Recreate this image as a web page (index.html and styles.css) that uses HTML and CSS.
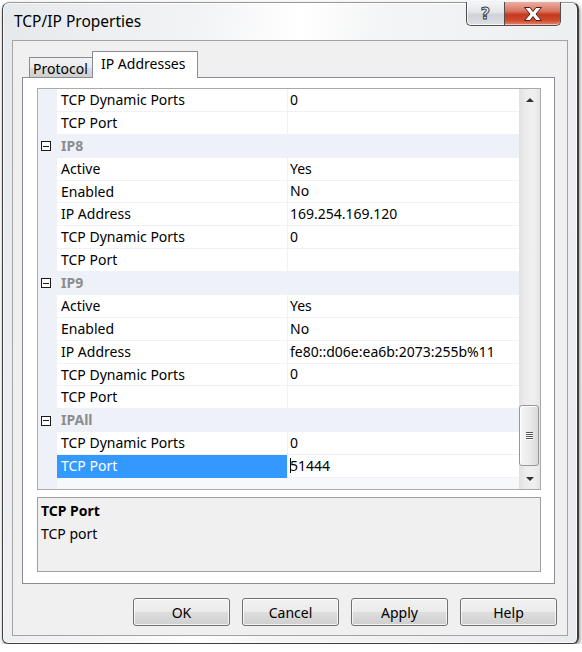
FILE: index.html
```html
<!DOCTYPE html>
<html>
<head>
<meta charset="utf-8">
<title>TCP/IP Properties</title>
<link rel="stylesheet" href="styles.css">
</head>
<body>
<div class="window">
  <div class="titlebar">
    <span class="title">TCP/IP Properties</span>
    <div class="caption">
      <div class="cbtn help"><span class="qmark">?</span></div>
      <div class="cbtn close">
        <svg width="24" height="18" viewBox="0 0 24 18"><path d="M3.5 2.5 H9 L12 6.5 L15 2.5 H20.5 L15 9 L20.5 15.5 H15 L12 11.5 L9 15.5 H3.5 L9 9 Z" fill="#fff" stroke="#5a1e14" stroke-width="1" stroke-linejoin="round"/></svg>
      </div>
    </div>
  </div>
  <div class="client">
    <div class="tabs">
      <div class="tab">Protocol</div>
      <div class="tab active">IP Addresses</div>
    </div>
    <div class="tabpage">
      <div class="grid">
        <div class="rows">
          <div class="row"><div class="gutter"></div><div class="name">TCP Dynamic Ports</div><div class="value">0</div></div>
          <div class="row"><div class="gutter"></div><div class="name">TCP Port</div><div class="value"></div></div>
          <div class="row cat"><div class="gutter"><span class="toggle"></span></div><div class="catname">IP8</div></div>
          <div class="row"><div class="gutter"></div><div class="name">Active</div><div class="value">Yes</div></div>
          <div class="row"><div class="gutter"></div><div class="name">Enabled</div><div class="value">No</div></div>
          <div class="row"><div class="gutter"></div><div class="name">IP Address</div><div class="value">169.254.169.120</div></div>
          <div class="row"><div class="gutter"></div><div class="name">TCP Dynamic Ports</div><div class="value">0</div></div>
          <div class="row"><div class="gutter"></div><div class="name">TCP Port</div><div class="value"></div></div>
          <div class="row cat"><div class="gutter"><span class="toggle"></span></div><div class="catname">IP9</div></div>
          <div class="row"><div class="gutter"></div><div class="name">Active</div><div class="value">Yes</div></div>
          <div class="row"><div class="gutter"></div><div class="name">Enabled</div><div class="value">No</div></div>
          <div class="row"><div class="gutter"></div><div class="name">IP Address</div><div class="value">fe80::d06e:ea6b:2073:255b%11</div></div>
          <div class="row"><div class="gutter"></div><div class="name">TCP Dynamic Ports</div><div class="value">0</div></div>
          <div class="row"><div class="gutter"></div><div class="name">TCP Port</div><div class="value"></div></div>
          <div class="row cat"><div class="gutter"><span class="toggle"></span></div><div class="catname">IPAll</div></div>
          <div class="row"><div class="gutter"></div><div class="name">TCP Dynamic Ports</div><div class="value">0</div></div>
          <div class="row selected"><div class="gutter"></div><div class="name">TCP Port</div><div class="value"><span class="caret"></span>51444</div></div>
          <div class="filler"><div class="gutter"></div><div class="fill"></div></div>
        </div>
        <div class="scrollbar">
          <div class="sb-btn"><span class="arrow-up"></span></div>
          <div class="sb-space"></div>
          <div class="thumb"><span class="grip"></span><span class="grip"></span><span class="grip"></span><span class="grip"></span></div>
          <div class="sb-rest"></div>
          <div class="sb-btn"><span class="arrow-down"></span></div>
        </div>
      </div>
      <div class="desc">
        <div class="desc-title">TCP Port</div>
        <div class="desc-text">TCP port</div>
      </div>
    </div>
    <div class="buttons">
      <div class="btn">OK</div>
      <div class="btn">Cancel</div>
      <div class="btn">Apply</div>
      <div class="btn">Help</div>
    </div>
  </div>
</div>
</body>
</html>
```
FILE: styles.css
```css
* { box-sizing: border-box; }
html, body { margin: 0; padding: 0; background: #ffffff; }
body {
  font-family: "Noto Sans", "Open Sans", sans-serif;
  font-size: 14px;
  color: #000;
}
.window {
  margin: 2px 0 0 2px;
  width: 577px;
  height: 642px;
  border: 1px solid #3e3e3e;
  border-right-width: 2px;
  border-top-color: #9a9a9a;
  border-radius: 7px 7px 6px 6px;
  background: linear-gradient(100deg, #e6e9ec 0%, #f3f4f6 30%, #ffffff 44%, #f4f5f6 55%, #e9ebee 100%);
  box-shadow: 1px 2px 4px rgba(0,0,0,0.45), inset 0 0 0 1px rgba(255,255,255,0.7);
  display: flex;
  flex-direction: column;
}
.titlebar {
  height: 37px;
  display: flex;
  align-items: flex-start;
  flex: none;
}
.title {
  padding: 8px 0 0 11px;
  font-size: 15.5px;
  line-height: 20px;
  color: #000;
}
.caption {
  margin-left: auto;
  margin-right: 16px;
  margin-top: -1px;
  display: flex;
}
.cbtn {
  height: 24px;
  display: flex;
  align-items: center;
  justify-content: center;
  border: 1px solid #4e4e4e;
  border-top: none;
}
.help {
  width: 38px;
  border-radius: 0 0 0 5px;
  border-right: none;
  background: linear-gradient(#f4f5f6 0%, #e3e5e8 45%, #cfd2d6 55%, #dde0e3 100%);
  box-shadow: inset 0 -1px 0 rgba(255,255,255,0.8), inset 1px 0 0 rgba(255,255,255,0.7);
}
.qmark {
  font-family: "DejaVu Sans", sans-serif;
  font-weight: bold;
  font-size: 16px;
  line-height: 16px;
  color: #f4f4f4;
  -webkit-text-stroke: 1px #3f3f3f;
}
.close {
  width: 57px;
  border-radius: 0 0 5px 0;
  background: linear-gradient(#eab0a3 0%, #d9745f 40%, #c4391f 55%, #cf4a2e 80%, #e2866c 100%);
  box-shadow: inset 0 -1px 0 rgba(255,210,190,0.8);
}
.close svg { display: block; }

.client {
  margin-left: 9px;
  width: 556px;
  height: 596px;
  border: 1px solid #a3a3a3;
  background: #f0f0f0;
  flex: none;
}
.tabs {
  margin: 10px 0 -1px 16px;
  height: 27px;
  display: flex;
  align-items: flex-start;
  position: relative;
  z-index: 1;
}
.tab {
  margin-top: 6px;
  height: 20px;
  width: 63px;
  border: 1px solid #898c95;
  border-bottom: none;
  border-right: none;
  background: linear-gradient(#f2f2f2, #ebebeb 50%, #dddddd 51%, #cfcfcf);
  padding-left: 3px;
  font-size: 14px;
  line-height: 21px;
  white-space: nowrap;
}
.tab.active {
  margin-top: 0;
  height: 27px;
  width: 106px;
  border-right: 1px solid #898c95;
  background: #ffffff;
  padding-left: 8px;
  line-height: 24px;
}
.tabpage {
  margin-left: 9px;
  width: 533px;
  height: 507px;
  border: 1px solid #898c95;
  background: #ffffff;
  padding: 10px 0 0 14px;
}
.grid {
  width: 504px;
  height: 402px;
  border: 1px solid #a9a9a9;
  display: flex;
  background: #ffffff;
}
.rows {
  width: 481px;
  display: flex;
  flex-direction: column;
}
.row {
  height: 22.875px;
  display: flex;
  flex: none;
  line-height: 22px;
}
.gutter {
  width: 19px;
  flex: none;
  background: #eef2f8;
  display: flex;
  align-items: center;
  padding-left: 3px;
}
.name {
  width: 230px;
  flex: none;
  padding-left: 4px;
  border-bottom: 1px solid #eef2f8;
  white-space: nowrap;
}
.value {
  flex: 1;
  padding-left: 2px;
  border-left: 1px solid #eef2f8;
  border-bottom: 1px solid #eef2f8;
  white-space: nowrap;
  display: flex;
  align-items: center;
}
.row.cat { background: #eef2f8; }
.catname {
  padding-left: 4px;
  font-weight: bold;
  color: #8c8c8c;
}
.toggle {
  width: 10px;
  height: 10px;
  border: 1px solid #1a1a1a;
  background: #ffffff;
  position: relative;
  display: block;
}
.toggle::after {
  content: "";
  position: absolute;
  left: 1px;
  right: 1px;
  top: 3.5px;
  height: 1px;
  background: #1a1a1a;
}
.row.selected .name {
  background: #3399ff;
  color: #ffffff;
  border-bottom-color: #3399ff;
}
.caret {
  display: inline-block;
  width: 1px;
  height: 15px;
  background: #000;
  margin-right: -1px;
}
.filler {
  flex: 1;
  display: flex;
}
.fill { flex: 1; background: #f7f8fa; }

.scrollbar {
  width: 21px;
  display: flex;
  flex-direction: column;
  background: linear-gradient(to right, #e1e1e1, #ececec 30%, #f0f0f0 70%, #e6e6e6);
}
.sb-btn {
  height: 21px;
  flex: none;
  display: flex;
  align-items: center;
  justify-content: center;
}
.arrow-up {
  width: 0; height: 0;
  border-left: 4px solid transparent;
  border-right: 4px solid transparent;
  border-bottom: 4px solid #333;
}
.arrow-down {
  width: 0; height: 0;
  border-left: 4px solid transparent;
  border-right: 4px solid transparent;
  border-top: 4px solid #333;
}
.sb-space { height: 295px; flex: none; }
.thumb {
  height: 61px;
  flex: none;
  margin: 0 1px 0 0;
  border: 1px solid #979797;
  border-radius: 3px;
  background: linear-gradient(to right, #f6f6f6, #ebebeb 50%, #dadada);
  box-shadow: inset 1px 1px 0 #ffffff;
  display: flex;
  flex-direction: column;
  align-items: center;
  justify-content: center;
  gap: 1px;
}
.grip {
  width: 7px;
  height: 1px;
  background: #555;
  box-shadow: 0 1px 0 #ffffff;
}
.sb-rest { flex: 1; }

.desc {
  margin-top: 7px;
  width: 504px;
  height: 75px;
  border: 1px solid #a0a0a0;
  background: #f0f0f0;
  padding: 1px 0 0 3px;
  line-height: 23px;
}
.desc-title { font-weight: bold; }

.buttons {
  display: flex;
  justify-content: flex-end;
  gap: 12px;
  margin-top: 14px;
  padding-right: 10px;
}
.btn {
  width: 97px;
  height: 28px;
  border: 1px solid #707070;
  border-radius: 3px;
  background: linear-gradient(#f2f2f2 0%, #ebebeb 48%, #dddddd 52%, #cfcfcf 100%);
  box-shadow: inset 0 0 0 1px rgba(255,255,255,0.75);
  display: flex;
  align-items: center;
  justify-content: center;
  font-size: 14px;
}
```
